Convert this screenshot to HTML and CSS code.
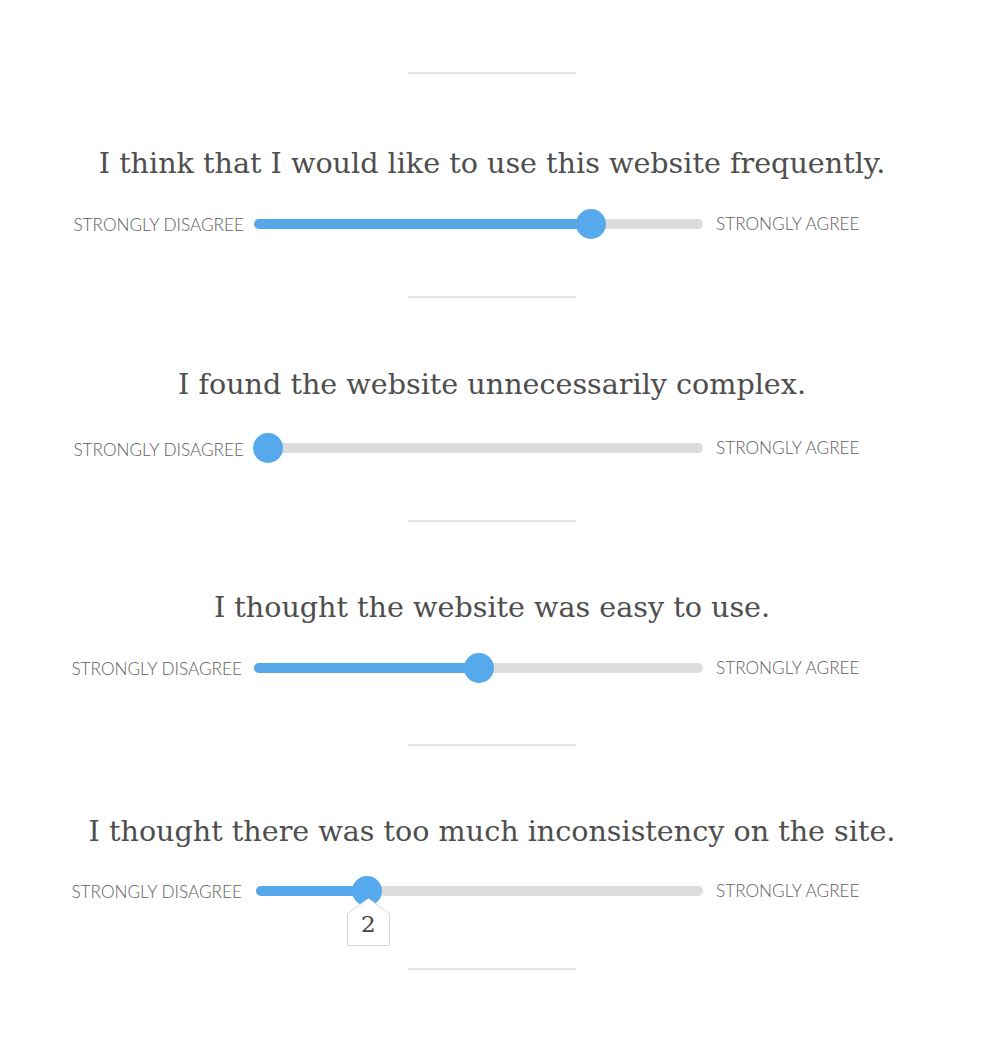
FILE: index.html
```html
<!DOCTYPE html>
<html>
<head>
<meta charset="utf-8">
<link rel="stylesheet" href="styles.css">
</head>
<body>
<main class="survey">
  <hr class="divider">
  <section class="item">
    <h2 class="question">I think that I would like to use this website frequently.</h2>
    <div class="scale">
      <span class="label label-left">Strongly disagree</span>
      <div class="track"><div class="fill" style="width:75.1%"></div><div class="thumb" style="left:75.1%"></div></div>
      <span class="label label-right">Strongly agree</span>
    </div>
  </section>
  <hr class="divider">
  <section class="item item-2">
    <h2 class="question">I found the website unnecessarily complex.</h2>
    <div class="scale">
      <span class="label label-left low">Strongly disagree</span>
      <div class="track"><div class="fill" style="width:3.1%"></div><div class="thumb" style="left:3.1%"></div></div>
      <span class="label label-right">Strongly agree</span>
    </div>
  </section>
  <hr class="divider">
  <section class="item item-3">
    <h2 class="question">I thought the website was easy to use.</h2>
    <div class="scale shifted">
      <span class="label label-left">Strongly disagree</span>
      <div class="track"><div class="fill" style="width:50.1%"></div><div class="thumb" style="left:50.1%"></div></div>
      <span class="label label-right">Strongly agree</span>
    </div>
  </section>
  <hr class="divider">
  <section class="item item-4">
    <h2 class="question">I thought there was too much inconsistency on the site.</h2>
    <div class="scale shifted">
      <span class="label label-left">Strongly disagree</span>
      <div class="track track-narrow"><div class="fill" style="width:24.8%"></div><div class="thumb" style="left:24.8%">
        <div class="tip"><svg class="tip-shape" width="43" height="48" viewBox="0 0 43 48"><polygon points="0.5,15.5 21.5,0.5 42.5,15.5 42.5,47.5 0.5,47.5" fill="#fff" stroke="#d6d6d6" stroke-width="1"/></svg><span class="tip-value">2</span></div>
      </div></div>
      <span class="label label-right">Strongly agree</span>
    </div>
  </section>
  <hr class="divider">
</main>
</body>
</html>
```
FILE: styles.css
```css
html, body {
  margin: 0;
  padding: 0;
  background: #fff;
}
.survey {
  width: 984px;
  padding-top: 72px;
}
.divider {
  width: 168px;
  height: 2px;
  border: 0;
  margin: 0 auto;
  background: #e4e4e4;
}
.item {
  padding: 69px 0 52px;
}
.item-2 {
  padding-top: 66px;
}
.item-2 .scale {
  margin-top: 24px;
}
.item-3 {
  padding-top: 65px;
  padding-bottom: 56px;
}
.item-4 {
  padding-top: 65px;
  padding-bottom: 57px;
}
.item-4 .scale {
  margin-top: 20px;
}
.question {
  margin: 0;
  text-align: center;
  font-family: "DejaVu Serif", serif;
  font-weight: normal;
  font-size: 28.6px;
  line-height: 40px;
  color: #4e4e4e;
}
.scale {
  display: grid;
  grid-template-columns: 244px 459px 1fr;
  align-items: center;
  margin-top: 21px;
  height: 40px;
}
.label {
  font-family: "Lato", sans-serif;
  font-weight: 300;
  font-size: 17.2px;
  text-transform: uppercase;
  color: #5e5e5e;
  white-space: nowrap;
}
.label-left {
  text-align: right;
}
.label-right {
  padding-left: 13px;
  margin-top: -1px;
}
.low {
  margin-top: 3px;
}
.shifted .label-left {
  padding-right: 2px;
}
.track {
  position: relative;
  height: 10px;
  margin-left: 10px;
  border-radius: 5px;
  background: #dddddd;
}
.track-narrow {
  margin-left: 12px;
}
.fill {
  height: 10px;
  border-radius: 5px;
  background: #55a7ea;
}
.thumb {
  position: absolute;
  top: 50%;
  width: 30px;
  height: 30px;
  margin: -15px 0 0 -15px;
  border-radius: 50%;
  background: #56a9ed;
}
.tip {
  position: absolute;
  left: -5px;
  top: 22px;
  width: 43px;
  height: 48px;
}
.tip-shape {
  position: absolute;
  left: 0;
  top: 0;
}
.tip-value {
  position: absolute;
  left: 0;
  right: 0;
  top: 14px;
  text-align: center;
  font-family: "DejaVu Serif", serif;
  font-size: 23px;
  line-height: 24px;
  color: #444;
}
```
